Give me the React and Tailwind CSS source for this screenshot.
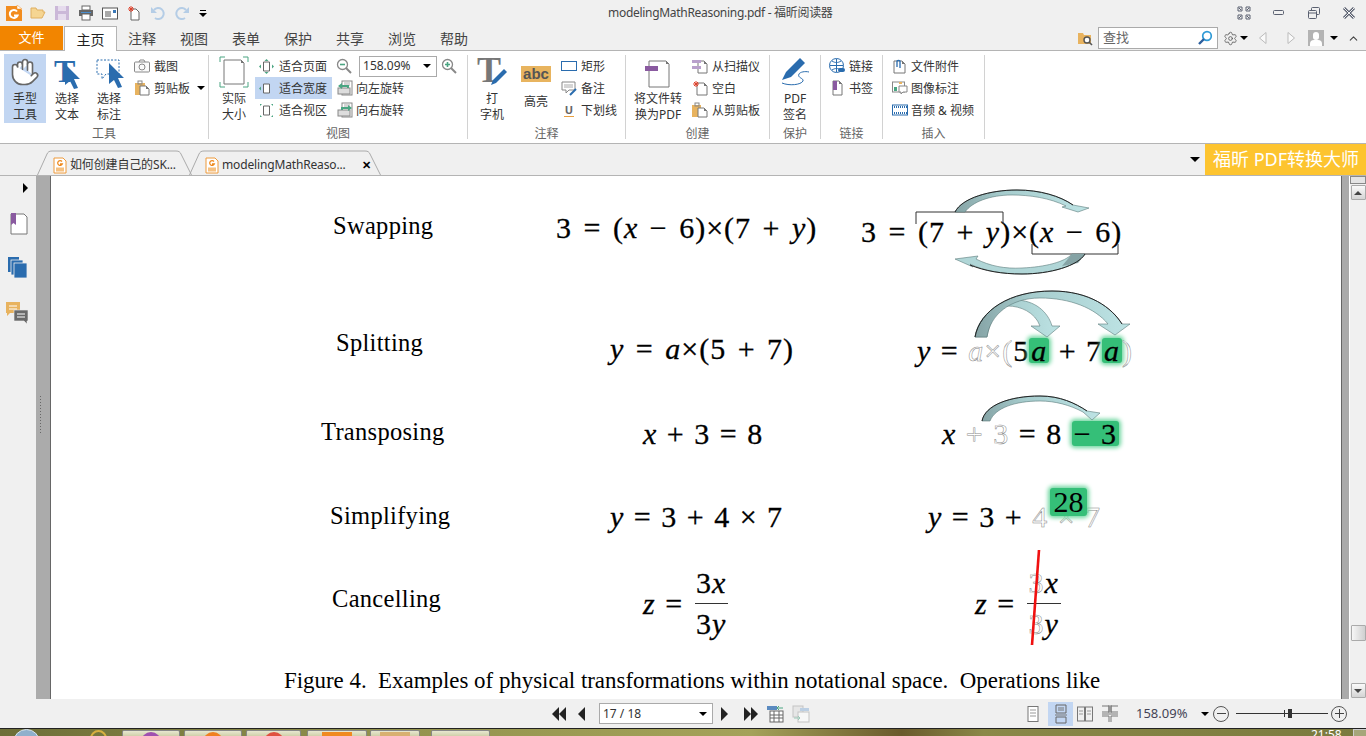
import { Hand, ChevronUp, Settings } from "lucide-react";

/* ICONOS */

function Ic({ w = 16, h = 16, children, className = "" }) {
  return (
    <svg width={w} height={h} viewBox={`0 0 ${w} ${h}`} fill="none" className={`shrink-0 overflow-visible ${className}`}>
      {children}
    </svg>
  );
}

const Pagina = ({ x = 3, y = 1, w = 10, h = 14 }) => (
  <>
    <path d={`M${x} ${y}H${x + w - 3}L${x + w} ${y + 3}V${y + h}H${x}Z`} fill="#fff" stroke="#777" />
    <path d={`M${x + w - 3} ${y}V${y + 3}H${x + w}Z`} fill="#777" />
  </>
);

const Seta = ({ className = "" }) => (
  <span className={`inline-block w-0 h-0 border-x-[4px] border-x-transparent border-t-[4px] border-t-black ${className}`}></span>
);

function LogoFoxit({ size = 16 }) {
  return (
    <svg width={size} height={size} viewBox="0 0 16 16" className="shrink-0">
      <path d="M0 1H11L16 5V16H0Z" fill="#f28c1e" />
      <path d="M11 0L16 4H11Z" fill="#fff" stroke="#f28c1e" strokeWidth="0.5" />
      <path d="M11 6.5A4 4 0 1 0 11.5 10.5H8" stroke="#fff" strokeWidth="2" fill="none" />
    </svg>
  );
}

function IconePdf() {
  return (
    <svg width="14" height="17" viewBox="0 0 14 17" className="shrink-0">
      <path d="M1 1H10L13 4V16H1Z" fill="#fff" stroke="#ee9a3a" />
      <path d="M9 4.5A2.4 2.4 0 1 0 9.3 7H7" stroke="#ee8a1e" strokeWidth="1.3" fill="none" />
      <rect x="3" y="10.5" width="8" height="4" fill="#f5c080" />
    </svg>
  );
}

function Cursor({ x, y, cor = "#2a6cae" }) {
  return <path d={`M${x} ${y}L${x + 15} ${y + 15}H${x + 9}L${x + 13} ${y + 24}L${x + 9} ${y + 25}L${x + 5} ${y + 17}L${x} ${y + 21}Z`} fill={cor} />;
}

function LetraT({ x, y, cor, size = 32 }) {
  return (
    <text x={x} y={y} fontFamily="Liberation Serif" fontWeight="700" fontSize={size} fill={cor}>T</text>
  );
}

/* BARRA DE TITULO */

function BarraTitulo() {
  return (
    <div className="h-[26px] flex items-center relative shrink-0">
      <div className="flex items-center pl-[6px] gap-[8px]">
        <LogoFoxit />
        <Ic><path d="M1 13V3H6L7 5H13V7H15L12 13Z" fill="#f5d592" stroke="#e0b060" /></Ic>
        <Ic><path d="M1 1H15V15H1Z" fill="#cbb8d8" /><rect x="4" y="1" width="8" height="5" fill="#e6dced" /><rect x="4" y="9" width="8" height="6" fill="#e6dced" /></Ic>
        <Ic><rect x="4" y="1" width="8" height="4" fill="#fff" stroke="#666" /><rect x="1" y="5" width="14" height="6" fill="#666" /><rect x="4" y="9" width="8" height="6" fill="#fff" stroke="#666" /><rect x="3" y="7" width="10" height="1" fill="#4a8fd0" /></Ic>
        <Ic><rect x="0.5" y="3" width="15" height="11" fill="#fff" stroke="#555" /><path d="M3 7H9M3 9H9M3 11H9" stroke="#555" /><rect x="11" y="5" width="3" height="3" fill="#3a78b8" /></Ic>
        <Ic><path d="M5 4H10L13 7V15H5Z" fill="#fff" stroke="#666" /><path d="M5 1V7M2 4H8M3 2L7 6M7 2L3 6" stroke="#e0402a" /></Ic>
        <Ic><path d="M4 5A5.5 5.5 0 1 1 5 13" stroke="#b5cde6" strokeWidth="2" /><path d="M1 2V8H7Z" fill="#b5cde6" /></Ic>
        <Ic><path d="M12 5A5.5 5.5 0 1 0 11 13" stroke="#b5cde6" strokeWidth="2" /><path d="M15 2V8H9Z" fill="#b5cde6" /></Ic>
        <div className="flex flex-col items-center gap-[2px] ml-[1px]">
          <span className="w-[6px] h-px bg-black"></span>
          <Seta />
        </div>
      </div>
      <div className="absolute left-[608px] top-[5px] text-[12px] leading-[16px] tracking-[-0.3px] text-[#444] whitespace-nowrap">modelingMathReasoning.pdf - 福昕阅读器</div>
      <div className="ml-auto flex items-center pr-[10px] gap-[21px] text-[#555]">
        <Ic w={14} h={14}>
          <path d="M1 1H5V5H1ZM9 1H13V5H9ZM1 9H5V13H1ZM9 9H13V13H9Z" stroke="#5a6070" />
          <path d="M2 2L4 4M12 2L10 4M2 12L4 10M12 12L10 10" stroke="#5a6070" />
        </Ic>
        <Ic w={14} h={14}><rect x="1.5" y="4.5" width="10" height="4" rx="1" stroke="#5a6070" /></Ic>
        <Ic w={14} h={14}><rect x="4.5" y="1.5" width="8" height="7" rx="1" stroke="#5a6070" /><rect x="1.5" y="4.5" width="8" height="8" rx="1" fill="#f0f0f0" stroke="#5a6070" /><path d="M2 7H9" stroke="#5a6070" /></Ic>
        <Ic w={14} h={14}><path d="M2 2L12 12M12 2L2 12" stroke="#5a6070" strokeWidth="3" /><path d="M2 2L12 12M12 2L2 12" stroke="#f0f0f0" /></Ic>
      </div>
    </div>
  );
}

/* ABAS DO MENU */

function BarraAbas() {
  const abas = ["注释", "视图", "表单", "保护", "共享", "浏览", "帮助"];

  return (
    <div className="h-[25px] flex border-b border-[#b4b4b4] shrink-0 text-[14px]">
      <div className="w-[63px] h-[24px] bg-[#f28500] text-white text-[13px] flex items-center justify-center">文件</div>
      <div className="w-[53px] h-[25px] ml-[1px] bg-white border border-b-0 border-[#b4b4b4] flex items-center justify-center text-[#222]">主页</div>
      <div className="flex -ml-px">
        {abas.map((a) => (
          <div key={a} className="w-[52px] flex items-center justify-center text-[#444]">{a}</div>
        ))}
      </div>
      <div className="ml-auto flex items-center pr-[6px]">
        <Ic>
          <path d="M1 14V3H6L7 5H14V14Z" fill="#e8b35f" />
          <circle cx="10" cy="10" r="3" fill="#fff" stroke="#555" strokeWidth="1.4" />
          <path d="M12 12L15 15" stroke="#555" strokeWidth="1.6" />
        </Ic>
        <div className="w-[120px] h-[22px] ml-[5px] bg-white border border-[#aaa] flex items-center px-[4px] text-[13px] text-[#666]">
          查找
          <svg width="16" height="16" viewBox="0 0 16 16" fill="none" className="ml-auto">
            <circle cx="10" cy="6" r="4.3" stroke="#2f9ad6" strokeWidth="1.7" />
            <path d="M7 9L2 14" stroke="#2b5f9e" strokeWidth="2.4" />
          </svg>
        </div>
        <Settings size={15} strokeWidth={1.3} className="ml-[5px] text-[#555]" />
        <Seta className="ml-[2px]" />
        <Ic w={10} h={14} className="ml-[10px]"><path d="M8 1.5L1.5 7L8 12.5Z" stroke="#bbb" fill="#fafafa" /></Ic>
        <Ic w={10} h={14} className="ml-[18px]"><path d="M2 1.5L8.5 7L2 12.5Z" stroke="#bbb" fill="#fafafa" /></Ic>
        <div className="w-[16px] h-[16px] ml-[12px] bg-[#b3b3b3] overflow-hidden flex flex-col items-center">
          <span className="w-[6px] h-[8px] mt-[2px] rounded-full bg-white"></span>
          <span className="w-[12px] h-[6px] rounded-t-[4px] bg-white"></span>
        </div>
        <Seta className="ml-[6px]" />
        <ChevronUp size={13} strokeWidth={2} className="ml-[9px] text-[#444]" />
      </div>
    </div>
  );
}

/* FAIXA DE OPCOES */

function Grupo({ titulo, w, children }) {
  return (
    <>
      <div className={`${w} flex flex-col shrink-0`}>
        <div className="h-[71px] flex items-start">{children}</div>
        <div className="h-[18px] leading-[18px] text-center text-[#666]">{titulo}</div>
      </div>
      <div className="w-px h-[84px] mt-[1px] bg-[#d2d2d2] shrink-0"></div>
    </>
  );
}

function BotaoGrande({ icone, linhas, ativo, w = "w-[42px]", className = "" }) {
  return (
    <div className={`${w} h-[69px] flex flex-col items-center shrink-0 ${ativo ? "bg-[#c2d6f2]" : ""} ${className}`}>
      <div className="h-[39px] mb-px flex items-center justify-center">{icone}</div>
      {linhas.map((l) => (
        <div key={l} className="leading-[16px] whitespace-nowrap text-center">{l}</div>
      ))}
    </div>
  );
}

function BotaoPequeno({ icone, texto, ativo, seta, gap = "gap-[4px]", className = "" }) {
  return (
    <div className={`h-[22px] flex items-center ${gap} whitespace-nowrap ${ativo ? "bg-[#c2d6f2]" : ""} ${className}`}>
      {icone}
      <span className="pt-[2px]">{texto}</span>
      {seta && <Seta className="ml-[3px]" />}
    </div>
  );
}

function Coluna({ children, className = "" }) {
  return <div className={`flex flex-col mt-[1px] ${className}`}>{children}</div>;
}

function Ajuste({ tipo }) {
  return (
    <Ic w={15} h={15}>
      <path d="M4.5 3H10.5V12H4.5Z" fill="#fff" stroke="#666" />
      {tipo === "pagina" && <path d="M7.5 0L5.5 2H9.5ZM7.5 15L5.5 13H9.5ZM0 7.5L2 5.5V9.5ZM15 7.5L13 5.5V9.5Z" fill="#4aa582" />}
      {tipo === "largura" && <path d="M0 7.5L2 5.5V9.5Z" fill="#4aa582" />}
      {tipo === "visao" && <path d="M1 1L3 1L1 3ZM14 1V3L12 1ZM1 14V12L3 14ZM14 14H12L14 12Z" fill="#4aa582" />}
    </Ic>
  );
}

function Rotacao({ direita }) {
  return (
    <Ic>
      <rect x="5" y="1" width="10" height="14" fill="#fff" stroke="#888" />
      <path d="M7 3H13M7 5H13M7 12H13" stroke="#aaa" />
      <rect x="1" y="8" width="12" height="6" fill="#ddd" stroke="#888" />
      <path d={direita ? "M4 8V5H11V3L15 6L11 9V7H6V8Z" : "M12 8V5H5V3L1 6L5 9V7H10V8Z"} fill="#4aa582" />
    </Ic>
  );
}

function Ribbon() {
  return (
    <div className="h-[93px] bg-white border-b border-[#b4b4b4] flex pt-[3px] text-[12px] text-[#333] shrink-0">
      <Grupo titulo="工具" w="w-[208px]">
        <BotaoGrande
          ativo
          className="ml-[4px]"
          linhas={["手型", "工具"]}
          icone={<Hand size={30} strokeWidth={1.3} fill="#fff" className="text-[#666] -scale-x-100" />}
        />
        <BotaoGrande
          linhas={["选择", "文本"]}
          icone={
            <Ic w={28} h={30}>
              <LetraT x={1} y={25} cor="#2a6cae" />
              <Cursor x={12} y={7} />
            </Ic>
          }
        />
        <BotaoGrande
          linhas={["选择", "标注"]}
          icone={
            <Ic w={30} h={30}>
              <path d="M3 3H25V17H12L8 22V17H3Z" stroke="#2a6cae" strokeDasharray="2 1.5" />
              <Cursor x={15} y={6} />
            </Ic>
          }
        />
        <Coluna className="ml-[4px]">
          <BotaoPequeno
            texto="截图"
            icone={<Ic><rect x="0.5" y="4" width="15" height="10" rx="1" fill="#fafafa" stroke="#888" /><circle cx="8" cy="9" r="3" stroke="#888" /><path d="M5 4L6 2H10L11 4" stroke="#888" /></Ic>}
          />
          <BotaoPequeno
            seta
            texto="剪贴板"
            icone={<Ic><rect x="1" y="3" width="10" height="12" fill="#e8b35f" /><rect x="4" y="1" width="4" height="3" stroke="#888" /><Pagina x={6} y={6} w={9} h={9} /></Ic>}
          />
        </Coluna>
      </Grupo>

      <Grupo titulo="视图" w="w-[258px]">
        <BotaoGrande
          className="ml-[4px]"
          linhas={["实际", "大小"]}
          icone={
            <Ic w={30} h={32}>
              <path d="M1 6V1H6M24 1H29V6M1 26V31H6M24 31H29V26" stroke="#4aa582" />
              <Pagina x={5} y={4} w={20} h={24} />
            </Ic>
          }
        />
        <Coluna>
          <BotaoPequeno gap="gap-[5px]" className="pl-[4px] pr-[5px]" texto="适合页面" icone={<Ajuste tipo="pagina" />} />
          <BotaoPequeno gap="gap-[5px]" className="pl-[4px] pr-[5px]" ativo texto="适合宽度" icone={<Ajuste tipo="largura" />} />
          <BotaoPequeno gap="gap-[5px]" className="pl-[4px] pr-[5px]" texto="适合视区" icone={<Ajuste tipo="visao" />} />
        </Coluna>
        <Coluna className="ml-[4px]">
          <div className="h-[22px] flex items-center">
            <Ic>
              <circle cx="6.5" cy="6.5" r="5" fill="#fff" stroke="#888" strokeWidth="1.3" />
              <path d="M4 6.5H9" stroke="#4aa582" strokeWidth="1.6" />
              <path d="M10 10L15 15" stroke="#888" strokeWidth="2" />
            </Ic>
            <div className="w-[78px] h-[21px] ml-[7px] bg-white border border-[#aaa] flex items-center pl-[3px] pr-[5px] text-[12px]">
              158.09%
              <Seta className="ml-auto" />
            </div>
            <Ic className="ml-[4px]">
              <circle cx="6.5" cy="6.5" r="5" fill="#fff" stroke="#888" strokeWidth="1.3" />
              <path d="M4 6.5H9M6.5 4V9" stroke="#4aa582" strokeWidth="1.6" />
              <path d="M10 10L15 15" stroke="#888" strokeWidth="2" />
            </Ic>
          </div>
          <BotaoPequeno gap="gap-[3px]" className="pl-px" texto="向左旋转" icone={<Rotacao />} />
          <BotaoPequeno gap="gap-[3px]" className="pl-px" texto="向右旋转" icone={<Rotacao direita />} />
        </Coluna>
      </Grupo>

      <Grupo titulo="注释" w="w-[157px]">
        <BotaoGrande
          className="ml-[3px]"
          linhas={["打", "字机"]}
          icone={
            <Ic w={32} h={32}>
              <LetraT x={1} y={26} cor="#777" size={36} />
              <path d="M15 29L17 24L28 13L31 16L20 27Z" fill="#2a6cae" />
            </Ic>
          }
        />
        <BotaoGrande
          className="ml-[2px]"
          linhas={["高亮"]}
          icone={
            <div className="w-[30px] h-[16px] bg-[#e8b45f] text-[#555] font-bold text-[15px] leading-[15px] text-center font-['Liberation_Sans',sans-serif]">abc</div>
          }
        />
        <Coluna className="ml-[4px]">
          <BotaoPequeno texto="矩形" icone={<Ic><rect x="0.5" y="3.5" width="15" height="9" fill="#fff" stroke="#2a6cae" /></Ic>} />
          <BotaoPequeno texto="备注" icone={<Ic><path d="M1 2H14V10H8L5 13V10H1Z" fill="#fff" stroke="#888" /><path d="M3 5H12M3 7H12" stroke="#aaa" /><path d="M9 15L15 9" stroke="#2a6cae" strokeWidth="2" /></Ic>} />
          <BotaoPequeno texto="下划线" icone={<div className="w-[16px] text-center text-[11px] leading-[13px] font-bold text-[#666]"><div className="mx-auto w-[10px] border-b border-[#e8a040]">U</div></div>} />
        </Coluna>
      </Grupo>

      <Grupo titulo="创建" w="w-[143px]">
        <BotaoGrande
          w="w-[48px]"
          className="ml-[8px]"
          linhas={["将文件转", "换为PDF"]}
          icone={
            <Ic w={28} h={30}>
              <Pagina x={5} y={4} w={20} h={26} />
              <rect x="1" y="9" width="13" height="5" fill="#8a5aa0" />
            </Ic>
          }
        />
        <Coluna className="ml-[10px]">
          <BotaoPequeno texto="从扫描仪" icone={<Ic><Pagina x={6} y={3} w={9} h={12} /><rect x="0" y="2" width="9" height="3" fill="#b9a0cc" /><rect x="0" y="8" width="9" height="3" fill="#b9a0cc" /></Ic>} />
          <BotaoPequeno texto="空白" icone={<Ic><Pagina x={5} y={3} w={10} h={12} /><path d="M4 1V7M1 4H7M2 2L6 6M6 2L2 6" stroke="#e0402a" /></Ic>} />
          <BotaoPequeno texto="从剪贴板" icone={<Ic><rect x="0" y="3" width="9" height="12" fill="#e8b35f" /><rect x="3" y="1" width="4" height="3" stroke="#888" /><Pagina x={6} y={6} w={9} h={9} /></Ic>} />
        </Coluna>
      </Grupo>

      <Grupo titulo="保护" w="w-[50px]">
        <BotaoGrande
          className="ml-[4px]"
          linhas={["PDF", "签名"]}
          icone={
            <Ic w={32} h={32}>
              <path d="M3 24L7 16L21 2L26 7L12 21Z" fill="#2a6cae" />
              <path d="M3 27C10 30 22 29 24 25C25 22 18 22 20 18C21 16 26 15 30 16" stroke="#2a6cae" />
            </Ic>
          }
        />
      </Grupo>

      <Grupo titulo="链接" w="w-[61px]">
        <Coluna className="ml-[8px]">
          <BotaoPequeno texto="链接" icone={<Ic><circle cx="7.5" cy="7.5" r="7" fill="#fff" stroke="#2a6cae" /><path d="M1 7.5H14M7.5 1V14M3 3C6 5 9 5 12 3M3 12C6 10 9 10 12 12" stroke="#2a6cae" /><rect x="9" y="10" width="7" height="4" rx="2" fill="#2a6cae" /></Ic>} />
          <BotaoPequeno texto="书签" icone={<Ic><Pagina x={4} y={1} w={9} h={14} /><rect x="4" y="1" width="4" height="9" fill="#8a5aa0" /></Ic>} />
        </Coluna>
      </Grupo>

      <Grupo titulo="插入" w="w-[101px]">
        <Coluna className="ml-[9px]">
          <BotaoPequeno gap="gap-[3px]" texto="文件附件" icone={<Ic><Pagina x={2} y={3} w={11} h={12} /><path d="M8 10V3A2 2 0 0 0 5 3V9" stroke="#2a6cae" strokeWidth="1.3" /></Ic>} />
          <BotaoPequeno gap="gap-[3px]" texto="图像标注" icone={<Ic><rect x="0.5" y="2" width="12" height="10" fill="#fff" stroke="#888" /><rect x="2" y="7" width="3" height="4" fill="#4aa582" /><path d="M7 6H15V12H11L9 14V12H7Z" fill="#fff" stroke="#888" /><rect x="7" y="2" width="3" height="2" fill="#e8b35f" /></Ic>} />
          <BotaoPequeno gap="gap-[3px]" texto="音频 & 视频" icone={<Ic><rect x="0.5" y="3" width="15" height="10" fill="#fff" stroke="#2a6cae" /><path d="M0 5H16M0 11H16" stroke="#2a6cae" strokeWidth="2" strokeDasharray="1 1" /></Ic>} />
        </Coluna>
      </Grupo>
    </div>
  );
}

/* ABAS DOS DOCUMENTOS */

function AbaDoc({ largura, icone, texto, fechar, className = "" }) {
  return (
    <div className={`relative h-[25px] shrink-0 flex items-center ${className}`} style={{ width: largura }}>
      <svg width={largura} height="25" className="absolute left-0 top-0" fill="none">
        <path d={`M0.5 25L10 4C11 2 12 1 15 1H${largura - 16}C${largura - 13} 1 ${largura - 12} 2 ${largura - 11} 4L${largura - 0.5} 25`} stroke="#aaa" />
      </svg>
      <div className="relative flex items-center pl-[16px] pt-[5px] gap-[3px] w-full text-[12px] tracking-[-0.15px] text-[#333]">
        {icone}
        <span className="whitespace-nowrap">{texto}</span>
        {fechar && <span className="absolute right-[10px] top-[6px] text-[11px] leading-[15px] font-bold text-black">✕</span>}
      </div>
    </div>
  );
}

function BarraDocs() {
  return (
    <div className="h-[32px] border-b border-[#b4b4b4] flex items-end pl-[37px] shrink-0">
      <AbaDoc largura={155} icone={<IconePdf />} texto="如何创建自己的SK..." />
      <AbaDoc largura={192} className="-ml-[3px]" icone={<IconePdf />} texto="modelingMathReaso..." fechar />
      <div className="ml-auto self-stretch flex items-center">
        <span className="w-0 h-0 border-x-[5px] border-x-transparent border-t-[5px] border-t-black mr-[5px]"></span>
        <div className="w-[161px] h-full bg-[#fdc42f] text-white text-[18px] flex items-center pl-[8px] whitespace-nowrap">福昕 PDF转换大师</div>
      </div>
    </div>
  );
}

/* PAGINA DO PDF */

const V = ({ children }) => <i className="font-['Liberation_Serif',serif]">{children}</i>;
const Fantasma = ({ children }) => <span className="text-white font-light [-webkit-text-stroke:0.5px_#888]">{children}</span>;
const Verde = ({ children, className = "" }) => (
  <span className={`inline-block leading-[25px] px-[2px] bg-[#35bf78] rounded-[3px] shadow-[0_0_4px_2px_#6fd6a0] ${className}`}>{children}</span>
);

function Fracao({ cima, baixo, w }) {
  return (
    <span className="inline-flex flex-col items-center align-middle leading-[40px] ml-[2px]">
      <span className={`${w} text-center border-b border-[#333]`}>{cima}</span>
      <span>{baixo}</span>
    </span>
  );
}

function Linha({ label, pl1, f2, pl2, f3, pl3, ajusteLabel = "", ajuste2 = "", ajuste3 = "", className = "" }) {
  return (
    <div className={`h-[84px] flex items-center tracking-[1px] [word-spacing:1px] ${className}`}>
      <div className={`w-[489px] text-[24.5px] tracking-[0.3px] text-black ${ajusteLabel}`} style={{ paddingLeft: pl1 }}>{label}</div>
      <div className={`w-[300px] text-[30px] text-black whitespace-pre [-webkit-text-stroke:0.3px_#000] ${ajuste2}`} style={{ paddingLeft: pl2 }}>{f2}</div>
      <div className={`text-[30px] text-black whitespace-pre [-webkit-text-stroke:0.3px_#000] ${ajuste3}`} style={{ paddingLeft: pl3 }}>{f3}</div>
    </div>
  );
}

function Setas() {
  // desenhadas em coordenadas da tela, por isso o deslocamento do grupo
  return (
    <svg width="1290" height="523" className="absolute left-0 top-0 pointer-events-none" fill="none">
      <defs>
        <linearGradient id="grad" x1="0" y1="0" x2="1" y2="0">
          <stop offset="0" stopColor="#85a3a5" />
          <stop offset="0.35" stopColor="#a6cccd" />
          <stop offset="1" stopColor="#bde3e4" />
        </linearGradient>
      </defs>
      <g transform="translate(-51 -176)">
        <path d="M916 224V212H1003V224M1032 244V254H1118V244" stroke="#333" />
        <path d="M955 212C962 198 990 190 1017 190C1040 190 1060 196 1073 205L1089 208L1078 212L1062 207L1066 206C1050 198 1030 195 1012 195C990 195 972 202 965 212Z" fill="url(#grad)" stroke="#5a7a7a" strokeWidth="0.6" />
        <path d="M955 212C962 198 990 190 1017 190C1040 190 1060 196 1073 205" stroke="#222" />
        <path d="M1085 254C1078 266 1050 274 1022 274C1000 274 982 270 970 264L973 267L955 259L978 256L976 259C990 266 1005 269 1022 268C1045 267 1065 262 1072 254Z" fill="#b0d6d7" stroke="#5a7a7a" strokeWidth="0.6" />
        <path d="M1072 254H1085L1078 263L1062 266Z" fill="#85a3a5" />
        <path d="M970 265C985 271 1002 274 1022 274C1050 274 1078 266 1085 254" stroke="#222" />
        <path d="M975 337C978 315 1000 301 1015 300C1035 300 1048 312 1052 326L1060 326L1047 337L1031 326L1040 326C1035 312 1020 306 1008 306C998 307 990 320 987 337Z" fill="url(#grad)" stroke="#5a7a7a" strokeWidth="0.6" />
        <path d="M975 337C980 310 1010 291 1052 291C1090 291 1112 308 1122 324L1130 324L1115 335L1098 324L1108 324C1095 308 1070 298 1040 298C1010 298 990 315 987 337Z" fill="url(#grad)" stroke="#5a7a7a" strokeWidth="0.6" />
        <path d="M975 337C980 310 1010 291 1052 291C1090 291 1112 308 1122 324" stroke="#222" />
        <path d="M982 421C985 405 1010 396 1040 396C1060 396 1075 403 1087 411L1100 413L1092 420L1083 412C1070 405 1055 401 1040 401C1015 401 995 408 990 421Z" fill="url(#grad)" stroke="#5a7a7a" strokeWidth="0.6" />
        <path d="M982 421C985 405 1010 396 1040 396C1060 396 1075 403 1087 411" stroke="#222" />
        <path d="M1039 550L1032 645" stroke="#f01010" strokeWidth="2.6" />
      </g>
    </svg>
  );
}

function PaginaPdf() {
  return (
    <div className="relative flex-1 bg-white overflow-hidden pt-[11px] font-['Liberation_Serif',serif] text-black">
      <Linha
        label="Swapping"
        pl1={282}
        ajusteLabel="pb-[6px]"
        pl2={16}
        ajuste2="pb-[4px] [word-spacing:3px]"
        f2={<>3 = (<V>x</V> − 6)×(7 + <V>y</V>)</>}
        pl3={21}
        ajuste3="pt-[4px] [word-spacing:3px]"
        f3={<>3 = (7 + <V>y</V>)×(<V>x</V> − 6)</>}
      />
      <Linha
        className="mt-[36px]"
        label="Splitting"
        pl1={285}
        ajusteLabel="pb-[12px]"
        pl2={70}
        ajuste2="pb-[2px] [word-spacing:3px]"
        f2={<><V>y</V> = <V>a</V>×(5 + 7)</>}
        pl3={77}
        ajuste3="pt-[2px]"
        f3={<><V>y</V> = <Fantasma><V>a</V>×(</Fantasma>5<Verde><V>a</V></Verde> + 7<Verde><V>a</V></Verde><Fantasma>)</Fantasma></>}
      />
      <Linha
        label="Transposing"
        pl1={270}
        ajusteLabel="pb-[2px]"
        pl2={103}
        f2={<><V>x</V> + 3 = 8</>}
        pl3={102}
        f3={<><V>x</V> <Fantasma>+ 3</Fantasma> = 8 <Verde>− 3</Verde></>}
      />
      <Linha
        label="Simplifying"
        pl1={279}
        ajusteLabel="pb-[2px]"
        pl2={70}
        ajuste2="pb-[2px]"
        f2={<><V>y</V> = 3 + 4 × 7</>}
        pl3={88}
        ajuste3="pb-[2px]"
        f3={<><V>y</V> = 3 + <Fantasma>4 × 7</Fantasma></>}
      />
      <Linha
        className="mt-[2px]"
        label="Cancelling"
        pl1={281}
        ajusteLabel="pb-[8px]"
        pl2={103}
        f2={<span className="flex items-center"><V>z</V> = <Fracao w="w-[33px]" cima={<>3<V>x</V></>} baixo={<>3<V>y</V></>} /></span>}
        pl3={135}
        f3={<span className="flex items-center"><V>z</V> = <Fracao w="w-[34px]" cima={<><Fantasma>3</Fantasma><V>x</V></>} baixo={<><Fantasma>3</Fantasma><V>y</V></>} /></span>}
      />
      <div className="mt-[23px] pl-[233px] text-[22.9px] leading-[26px] whitespace-pre">Figure 4.  Examples of physical transformations within notational space.  Operations like</div>
      <div className="mt-[1px] pl-[256px] text-[22.9px] leading-[26px] whitespace-pre">transposing, for example, are called physical and do not change the numerical value of</div>
      <Setas />
      <Verde className="absolute left-[999px] top-[312px] h-[28px] w-[37px] text-center text-[30px] !leading-[28px] !px-0">28</Verde>
    </div>
  );
}

function BarraLateral() {
  return (
    <>
      <div className="w-[36px] flex flex-col items-center shrink-0">
        <span className="mt-[7px] ml-[14px] w-0 h-0 border-y-[5px] border-y-transparent border-l-[5px] border-l-black"></span>
        <Ic w={18} h={22} className="mt-[20px] ml-[2px]">
          <path d="M1 1H14L17 4V21H1Z" fill="#fff" stroke="#777" />
          <path d="M1 0H6V12L3.5 10L1 12Z" fill="#8a5aa0" />
        </Ic>
        <Ic w={20} h={22} className="mt-[22px]">
          <rect x="0" y="0" width="11" height="15" fill="#2a6cae" />
          <rect x="3" y="3" width="12" height="15" fill="#2a6cae" stroke="#f0f0f0" strokeWidth="0.8" />
          <rect x="6" y="6" width="13" height="15" fill="#2a6cae" stroke="#f0f0f0" strokeWidth="0.8" />
        </Ic>
        <Ic w={24} h={23} className="mt-[23px]">
          <path d="M0 0H14V11H4L1 14V11H0Z" fill="#e8b35f" />
          <path d="M3 4H11M3 7H11" stroke="#fff" />
          <path d="M8 8H22V19H21V22L18 19H8Z" fill="#6a6a6a" stroke="#f0f0f0" strokeWidth="0.6" />
          <path d="M11 12H19M11 15H19" stroke="#fff" />
        </Ic>
      </div>
      <div className="w-[15px] bg-[#ababab] border-r border-[#666] flex items-center shrink-0">
        <div className="ml-[3px] mt-[-46px] w-[3px] h-[40px] bg-[radial-gradient(#666_35%,transparent_40%)] bg-[length:3px_3px]"></div>
      </div>
    </>
  );
}

function Rolagem() {
  return (
    <>
      <div className="w-[8px] bg-[#ababab] border-l border-[#666] shrink-0"></div>
      <div className="w-[17px] border-l border-white flex flex-col items-center shrink-0">
        <div className="w-[16px] h-[8px] bg-[#e4e4e4] border border-[#888]"></div>
        <div className="w-[15px] h-[15px] mt-px bg-[linear-gradient(#fafafa,#d4d4d4)] border border-[#aaa] rounded-[1px] flex items-center justify-center">
          <span className="w-0 h-0 border-x-[4px] border-x-transparent border-b-[4px] border-b-[#444]"></span>
        </div>
        <div className="w-[15px] h-[16px] mt-[425px] bg-[linear-gradient(90deg,#f6f6f6,#d0d0d0)] border border-[#aaa] rounded-[1px]"></div>
        <div className="w-[15px] h-[15px] mt-[42px] bg-[linear-gradient(#fafafa,#d4d4d4)] border border-[#aaa] rounded-[1px] flex items-center justify-center">
          <Seta className="opacity-70" />
        </div>
      </div>
    </>
  );
}

/* BARRA DE STATUS */

const Tri = ({ dir }) => (
  <span className={`block w-0 h-0 border-y-[7px] border-y-transparent ${dir === "e" ? "border-r-[7px] border-r-[#222]" : "border-l-[7px] border-l-[#222]"}`}></span>
);

function Visao({ children, ativo, className = "" }) {
  return <div className={`flex items-center justify-center w-[25px] h-[24px] ${ativo ? "bg-[#c2d6f2]" : ""} ${className}`}>{children}</div>;
}

function BarraStatus() {
  return (
    <div className="h-[29px] flex items-center text-[12px] text-[#333] shrink-0">
      <div className="flex items-center ml-[552px]">
        <Tri dir="e" /><Tri dir="e" />
      </div>
      <div className="ml-[12px]"><Tri dir="e" /></div>
      <div className="w-[114px] h-[21px] ml-[14px] bg-white border border-[#aaa] flex items-center pl-[3px] pr-[5px]">
        17 / 18
        <Seta className="ml-auto" />
      </div>
      <div className="ml-[8px]"><Tri dir="d" /></div>
      <div className="flex items-center ml-[16px]">
        <Tri dir="d" /><Tri dir="d" />
      </div>
      <Ic w={17} h={18} className="ml-[9px]">
        <rect x="0" y="1" width="10" height="4" fill="#5a8ac0" />
        <rect x="3" y="6" width="13" height="11" fill="#fff" stroke="#666" />
        <path d="M3 10H16M3 13H16M7 6V17M12 6V17" stroke="#666" />
        <path d="M16 3H10L12 1M10 3L12 5" stroke="#4aa582" />
      </Ic>
      <Ic w={17} h={18} className="ml-[9px] opacity-50">
        <rect x="0" y="1" width="10" height="11" fill="#ddd" stroke="#999" />
        <rect x="5" y="7" width="11" height="10" fill="#fff" stroke="#999" />
        <rect x="7" y="3" width="9" height="3" fill="#8ab0d8" />
        <path d="M1 13H7L5 11M7 13L5 15" stroke="#4aa582" />
      </Ic>
      <div className="flex items-center ml-[210px]">
        <Visao><Ic w={12} h={16}><rect x="1" y="0.5" width="10" height="15" fill="#fff" stroke="#777" /><path d="M3 4H9M3 7H9M3 10H9" stroke="#999" /></Ic></Visao>
        <Visao ativo className="ml-[3px]"><Ic w={12} h={20}><path d="M1 9V1H11V9ZM1 19V13H11V19Z" stroke="#666" /><path d="M3 4H9M3 6H9M0 11H12" stroke="#777" /></Ic></Visao>
        <Visao className="ml-[-1px]"><Ic w={16} h={16}><rect x="0.5" y="1" width="7" height="14" stroke="#777" /><rect x="8.5" y="1" width="7" height="14" stroke="#777" /><path d="M2 5H6M10 5H14M2 8H6M10 8H14" stroke="#999" /></Ic></Visao>
        <Visao><Ic w={16} h={20}><path d="M0 2H7V8H0M16 2H9V8H16M0 12H7V18M16 12H9V18M7 1V9M9 1V9M0 10H16" stroke="#777" /></Ic></Visao>
      </div>
      <span className="ml-[14px] text-[13px] text-[#445]">158.09%</span>
      <Seta className="ml-[14px]" />
      <div className="w-[16px] h-[16px] ml-[4px] rounded-full border border-[#555] flex items-center justify-center">
        <span className="w-[9px] h-px bg-[#444]"></span>
      </div>
      <div className="relative w-[92px] h-px ml-[7px] bg-[#333]">
        <span className="absolute left-[48px] top-[-3px] h-[7px] w-px bg-[#333]"></span>
        <span className="absolute left-[52px] top-[-4px] h-[9px] w-[4px] bg-[#333]"></span>
      </div>
      <div className="relative w-[16px] h-[16px] ml-[3px] rounded-full border border-[#555] flex items-center justify-center">
        <span className="w-[9px] h-px bg-[#444]"></span>
        <span className="absolute w-px h-[9px] bg-[#444]"></span>
      </div>
    </div>
  );
}

/* BARRA DE TAREFAS */

function BotaoTarefa({ w, ml, cor, quadrado }) {
  return (
    <div className={`${w} ${ml} h-[8px] mt-px border border-[#888] border-b-0 rounded-t-[2px] bg-[linear-gradient(#e8e8d0,#c6c69a)] flex justify-center shrink-0 overflow-hidden`}>
      <span className={`mt-px ${quadrado ? "w-[30px] h-[8px]" : "w-[20px] h-[20px] rounded-full"} ${cor}`}></span>
    </div>
  );
}

function BarraTarefas() {
  return (
    <div className="h-[8px] relative flex items-start overflow-hidden border-t border-[#222] bg-[linear-gradient(90deg,#6d6e38_0%,#94944e_30%,#a4a25a_55%,#6a5a2c_66%,#8a8848_72%,#7a7a3e_100%)] shrink-0">
      <span className="w-[27px] h-[27px] ml-[13px] rounded-full border border-[#d8e4ee] bg-[#8fb0cc] shrink-0"></span>
      <span className="w-[17px] h-[17px] ml-[50px] mt-px rounded-full border-2 border-[#d8b040] shrink-0"></span>
      <BotaoTarefa w="w-[58px]" ml="ml-[15px]" cor="bg-[#a050b0]" />
      <BotaoTarefa w="w-[58px]" ml="ml-[4px]" cor="bg-[#f08020]" />
      <BotaoTarefa w="w-[55px]" ml="ml-[4px]" cor="bg-[#e05040]" />
      <BotaoTarefa w="w-[60px]" ml="ml-[6px]" cor="bg-[#f08a20]" quadrado />
      <BotaoTarefa w="w-[50px]" ml="ml-[3px]" cor="bg-[#d8b070]" quadrado />
      <BotaoTarefa w="w-[59px]" ml="ml-[11px]" cor="bg-transparent" />
      <span className="absolute left-[1311px] top-0 text-white text-[12px] leading-[12px] font-['Noto_Sans',sans-serif]">21:58</span>
      <div className="absolute right-0 top-0 h-full w-[13px] bg-[#a6a67a] border-l border-t border-[#ccc]"></div>
    </div>
  );
}

export default function App() {
  return (
    <div className="w-[1366px] h-[736px] flex flex-col overflow-hidden bg-[#f0f0f0] font-['Noto_Sans','Noto_Sans_CJK_SC',sans-serif]">
      <BarraTitulo />
      <BarraAbas />
      <Ribbon />
      <BarraDocs />
      <div className="h-[523px] flex shrink-0">
        <BarraLateral />
        <PaginaPdf />
        <Rolagem />
      </div>
      <BarraStatus />
      <BarraTarefas />
    </div>
  );
}
